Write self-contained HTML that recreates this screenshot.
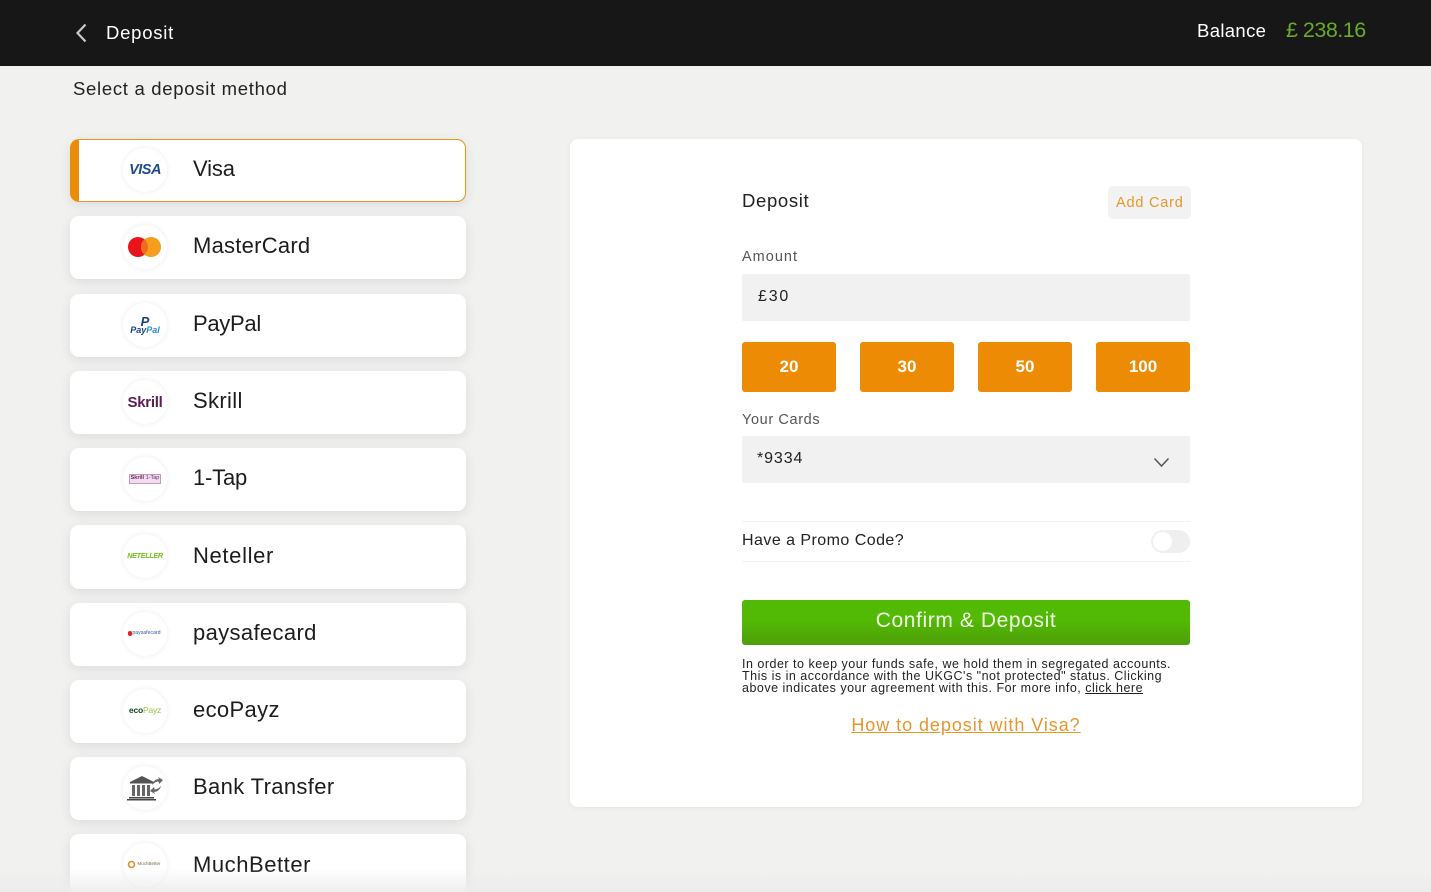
<!DOCTYPE html>
<html><head><meta charset="utf-8"><style>
*{box-sizing:border-box}
html,body{margin:0;padding:0;width:1431px;height:892px;overflow:hidden;background:#f1f1f0;font-family:"Liberation Sans",sans-serif;color:#1a1a1a}
#w{position:relative;width:1431px;height:892px;overflow:hidden}
.t{position:absolute;white-space:nowrap;line-height:1}
.top{position:absolute;left:0;top:0;width:1431px;height:66px;background:#171717}
.card{position:absolute;left:70px;width:396px;height:63px;background:#fff;border-radius:9px;box-shadow:0 3px 12px rgba(0,0,0,.09)}
.card.sel{border:1px solid #ec9420;border-left:9px solid #ec8c06}
.c{position:absolute;left:123px;width:44px;height:44px;margin-top:1px;border-radius:50%;background:#fff;box-shadow:0 0 6px rgba(0,0,0,.08);overflow:hidden}
.n{position:absolute;left:193px;font-size:22px;letter-spacing:.35px;line-height:1;white-space:nowrap;color:#1c1c1c}
.q{position:absolute;top:342px;width:94px;height:50px;background:#ee8b05;border-radius:3px;color:#fff;font-weight:bold;font-size:17px;text-align:center;line-height:50px}
.panel{position:absolute;left:570px;top:139px;width:792px;height:668px;background:#fff;border-radius:8px;box-shadow:0 1px 6px rgba(0,0,0,.05)}
.l{position:absolute;text-align:center;white-space:nowrap;line-height:1;font-weight:bold}
</style></head><body><div id="w">
<div class="top"></div>
<svg style="position:absolute;left:70px;top:20px" width="24" height="26"><path d="M15.5 4.500 L7.500 13 L15.500 21.500" fill="none" stroke="#c9c9c9" stroke-width="2.200"/></svg>
<div class="t" style="left:106px;top:24px;font-size:18.500px;letter-spacing:.75px;color:#fff">Deposit</div>
<div class="t" style="left:1197px;top:22px;font-size:18.500px;letter-spacing:.35px;color:#fff">Balance</div>
<div class="t" style="left:1286px;top:20px;font-size:21.500px;letter-spacing:-.5px;color:#6aab2c">£ 238.16</div>
<div class="t" style="left:73px;top:80px;font-size:18.500px;letter-spacing:.7px;color:#222">Select a deposit method</div>

<div class="card sel" style="top:139px"></div>
<div class="card" style="top:216px"></div>
<div class="card" style="top:294px"></div>
<div class="card" style="top:371px"></div>
<div class="card" style="top:448px"></div>
<div class="card" style="top:525px;height:64px"></div>
<div class="card" style="top:603px"></div>
<div class="card" style="top:680px"></div>
<div class="card" style="top:757px"></div>
<div class="card" style="top:834px"></div>

<div class="c" style="top:147px"></div>
<div class="c" style="top:224px"></div>
<div class="c" style="top:302px"></div>
<div class="c" style="top:379px"></div>
<div class="c" style="top:456px"></div>
<div class="c" style="top:533px"></div>
<div class="c" style="top:611px"></div>
<div class="c" style="top:688px"></div>
<div class="c" style="top:765px"></div>
<div class="c" style="top:842px"></div>

<div class="l" style="left:122px;width:46px;top:163px;font-size:14.500px;font-style:italic;color:#1c4a8f;letter-spacing:-.5px">VISA</div>
<svg style="position:absolute;left:122px;top:224px" width="46" height="46"><circle cx="16" cy="23" r="10" fill="#e8141c"/><circle cx="29" cy="23" r="10" fill="#f59e1e"/><path d="M22.500 15.400A10 10 0 0 1 22.500 30.600A10 10 0 0 1 22.500 15.400z" fill="#f26a1b"/></svg>
<div class="l" style="left:122px;width:46px;top:315px;font-size:13px;font-style:italic;color:#1b3f86">P</div>
<div class="l" style="left:122px;width:46px;top:326px;font-size:9px;font-style:italic;color:#1b3f86;letter-spacing:0">Pay<span style="color:#2790d0">Pal</span></div>
<div class="l" style="left:122px;width:46px;top:395px;font-size:15px;color:#5b1e55;letter-spacing:-.3px">Skrill</div>
<div style="position:absolute;left:129px;top:474px;width:32px;height:10px;background:#f2dcef;border:1px solid #c49ac0"></div>
<div class="l" style="left:129px;width:32px;top:476px;font-size:5.500px;color:#6b2a66;letter-spacing:0">Skrill <span style="font-weight:normal">1-Tap</span></div>
<div class="l" style="left:122px;width:46px;top:552px;font-size:7.200px;font-style:italic;color:#74c01c;letter-spacing:-.3px">NETELLER</div>
<div style="position:absolute;left:128px;top:631px;width:4px;height:5px;background:#d8232a;border-radius:2px"></div>
<div class="l" style="left:131px;width:31px;top:631px;font-size:5px;color:#2a5a9c;font-weight:normal;letter-spacing:.1px">paysafecard</div>
<div class="l" style="left:122px;width:46px;top:706px;font-size:8.500px;color:#16441f;letter-spacing:-.2px">eco<span style="color:#9bc23c;font-weight:normal">Payz</span></div>
<svg style="position:absolute;left:122px;top:765px" width="46" height="46"><path d="M8 17 L20 11 L32 17 L32 18.500 L8 18.500Z" fill="#555"/><path d="M10 20h3v11h-3zM15 20h3v11h-3zM20 20h3v11h-3zM25 20h3v11h-3z" fill="#666"/><path d="M7 32h25v1.500H7zM5 34h29v1.500H5z" fill="#444"/><path d="M30 20c1-4 4-6 7-6l-1-2 5 3-4 4-.5-2.500c-2 0-4 1-6.500 3.500z" fill="#666"/><path d="M39 21c-1 4-4 6-7 6l1 2-5-3 4-4 .5 2.500c2 0 4-1 6.500-3.500z" fill="#666"/></svg>
<svg style="position:absolute;left:127px;top:860px" width="9" height="9"><circle cx="4.500" cy="4.500" r="3" fill="none" stroke="#d9922b" stroke-width="1.600"/></svg>
<div class="l" style="left:136px;width:26px;top:862px;font-size:4.500px;color:#7a6a50;font-weight:normal">MuchBetter</div>

<div class="n" style="top:158px;letter-spacing:-.15px">Visa</div>
<div class="n" style="top:235px;letter-spacing:.25px">MasterCard</div>
<div class="n" style="top:313px;letter-spacing:-.3px">PayPal</div>
<div class="n" style="top:390px">Skrill</div>
<div class="n" style="top:467px;letter-spacing:-.2px">1-Tap</div>
<div class="n" style="top:545px;letter-spacing:.65px">Neteller</div>
<div class="n" style="top:622px">paysafecard</div>
<div class="n" style="top:699px">ecoPayz</div>
<div class="n" style="top:776px">Bank Transfer</div>
<div class="n" style="top:854px;letter-spacing:.55px">MuchBetter</div>

<div class="panel"></div>
<div class="t" style="left:742px;top:192px;font-size:18.500px;letter-spacing:.65px;color:#222">Deposit</div>
<div style="position:absolute;left:1108px;top:186px;width:83px;height:33px;background:#f2f2f2;border-radius:5px"></div>
<div class="t" style="left:1116px;top:196px;font-size:14.500px;letter-spacing:.8px;color:#e7962a">Add Card</div>
<div class="t" style="left:742px;top:250px;font-size:14.500px;letter-spacing:1px;color:#555">Amount</div>
<div style="position:absolute;left:742px;top:274px;width:448px;height:47px;background:#f1f1f1;border-radius:2px"></div>
<div class="t" style="left:758px;top:289px;font-size:16px;letter-spacing:1.800px;color:#222">£30</div>
<div class="q" style="left:742px">20</div>
<div class="q" style="left:860px">30</div>
<div class="q" style="left:978px">50</div>
<div class="q" style="left:1096px">100</div>
<div class="t" style="left:742px;top:413px;font-size:14.500px;letter-spacing:.62px;color:#555">Your Cards</div>
<div style="position:absolute;left:742px;top:436px;width:448px;height:47px;background:#f1f1f1;border-radius:2px"></div>
<div class="t" style="left:757px;top:451px;font-size:16px;letter-spacing:.9px;color:#222">*9334</div>
<svg style="position:absolute;left:1152px;top:455px" width="20" height="14"><path d="M2.500 3.500 L9.500 11 L16.500 3.500" fill="none" stroke="#555" stroke-width="1.500"/></svg>
<div style="position:absolute;left:742px;top:521px;width:448px;height:1px;background:#f2f2f2"></div>
<div style="position:absolute;left:742px;top:561px;width:448px;height:1px;background:#f2f2f2"></div>
<div class="t" style="left:742px;top:533px;font-size:16px;letter-spacing:.46px;color:#222">Have a Promo Code?</div>
<div style="position:absolute;left:1151px;top:530px;width:39px;height:23px;background:#efefef;border-radius:12px"></div>
<div style="position:absolute;left:1153px;top:532px;width:19px;height:19px;background:#fff;border-radius:50%"></div>
<div style="position:absolute;left:742px;top:600px;width:448px;height:45px;background:linear-gradient(#52b905 0%,#52b905 45%,#4f9e08 100%);border-radius:3px"></div>
<div class="t" style="left:742px;width:448px;text-align:center;top:610px;font-size:21px;letter-spacing:.6px;color:#f2fbe8">Confirm &amp; Deposit</div>
<div class="t" style="left:742px;top:658px;font-size:12.500px;line-height:12px;letter-spacing:.5px;color:#222">In order to keep your funds safe, we hold them in segregated accounts.<br>This is in accordance with the UKGC's "not protected" status. Clicking<br>above indicates your agreement with this. For more info, <u>click here</u></div>
<div class="t" style="left:742px;width:448px;text-align:center;top:716px;font-size:18px;letter-spacing:.94px;color:#e7962a;text-decoration:underline">How to deposit with Visa?</div>
<div style="position:absolute;left:0;top:868px;width:1431px;height:24px;background:linear-gradient(rgba(240,240,240,0),rgba(236,236,236,.85))"></div>
</div></body></html>
